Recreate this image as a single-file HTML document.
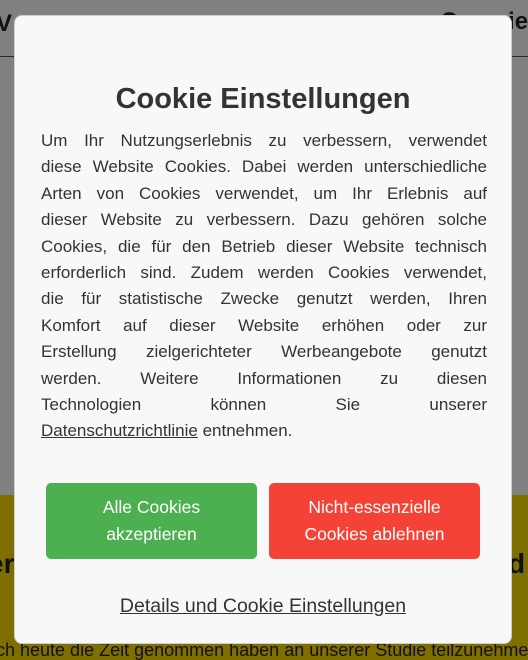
<!DOCTYPE html>
<html><head><meta charset="utf-8"><style>
html,body{margin:0;padding:0;width:528px;height:660px;overflow:hidden;position:relative;font-family:"Liberation Sans",sans-serif;}
.bg1{position:absolute;left:0;top:0;width:528px;height:495px;background:#808080;}
.line{position:absolute;left:0;top:56px;width:528px;height:1px;background:#2a2a2a;}
.bg2{position:absolute;left:0;top:495px;width:528px;height:165px;background:#7f6f00;}
.bt{position:absolute;font-weight:bold;color:#111;}
.modal{position:absolute;left:14px;top:15px;width:498px;height:629px;background:#f8f8f8;border-radius:8px;border:1px solid #cfcfcf;box-sizing:border-box;}
h1{position:absolute;left:0;width:100%;top:67px;margin:0;text-align:center;font-size:29px;font-weight:bold;color:#333;}
.txt{position:absolute;left:26px;top:112px;width:446px;font-size:17px;line-height:26.4px;color:#333;}
.txt div{text-align:justify;text-align-last:justify;white-space:nowrap;}
.txt div.l{text-align-last:left;}
.btn{position:absolute;top:467px;width:211px;height:76px;border-radius:5px;color:#fff;font-size:17.5px;line-height:27px;text-align:center;display:flex;align-items:center;justify-content:center;}
.link{position:absolute;left:0;width:100%;top:579px;text-align:center;font-size:19.5px;color:#333;text-decoration:underline;}
</style></head><body>
<div class="bg1"></div><div class="line"></div><div class="bg2"></div>
<div class="bt" style="left:-4px;top:10px;font-size:24px">V</div>
<div class="bt" style="left:440px;top:8px;font-size:24px">Overview</div>
<div class="bt" style="left:-12px;top:548px;font-size:28px">er</div>
<div class="bt" style="left:508px;top:548px;font-size:28px">d</div>
<div style="position:absolute;left:-4px;top:640px;font-size:18px;color:#111;white-space:nowrap">ch heute die Zeit genommen haben an unserer Studie teilzunehmen</div>
<div class="modal">
<h1>Cookie Einstellungen</h1>
<div class="txt">
<div>Um Ihr Nutzungserlebnis zu verbessern, verwendet</div>
<div>diese Website Cookies. Dabei werden unterschiedliche</div>
<div>Arten von Cookies verwendet, um Ihr Erlebnis auf</div>
<div>dieser Website zu verbessern. Dazu gehören solche</div>
<div>Cookies, die für den Betrieb dieser Website technisch</div>
<div>erforderlich sind. Zudem werden Cookies verwendet,</div>
<div>die für statistische Zwecke genutzt werden, Ihren</div>
<div>Komfort auf dieser Website erhöhen oder zur</div>
<div>Erstellung zielgerichteter Werbeangebote genutzt</div>
<div>werden. Weitere Informationen zu diesen</div>
<div>Technologien können Sie unserer</div>
<div class="l"><span style="text-decoration:underline">Datenschutzrichtlinie</span> entnehmen.</div>
</div>
<div class="btn" style="left:31px;background:#4caf50">Alle Cookies<br>akzeptieren</div>
<div class="btn" style="left:254px;background:#f44336">Nicht-essenzielle<br>Cookies ablehnen</div>
<div class="link">Details und Cookie Einstellungen</div>
</div>
</body></html>
